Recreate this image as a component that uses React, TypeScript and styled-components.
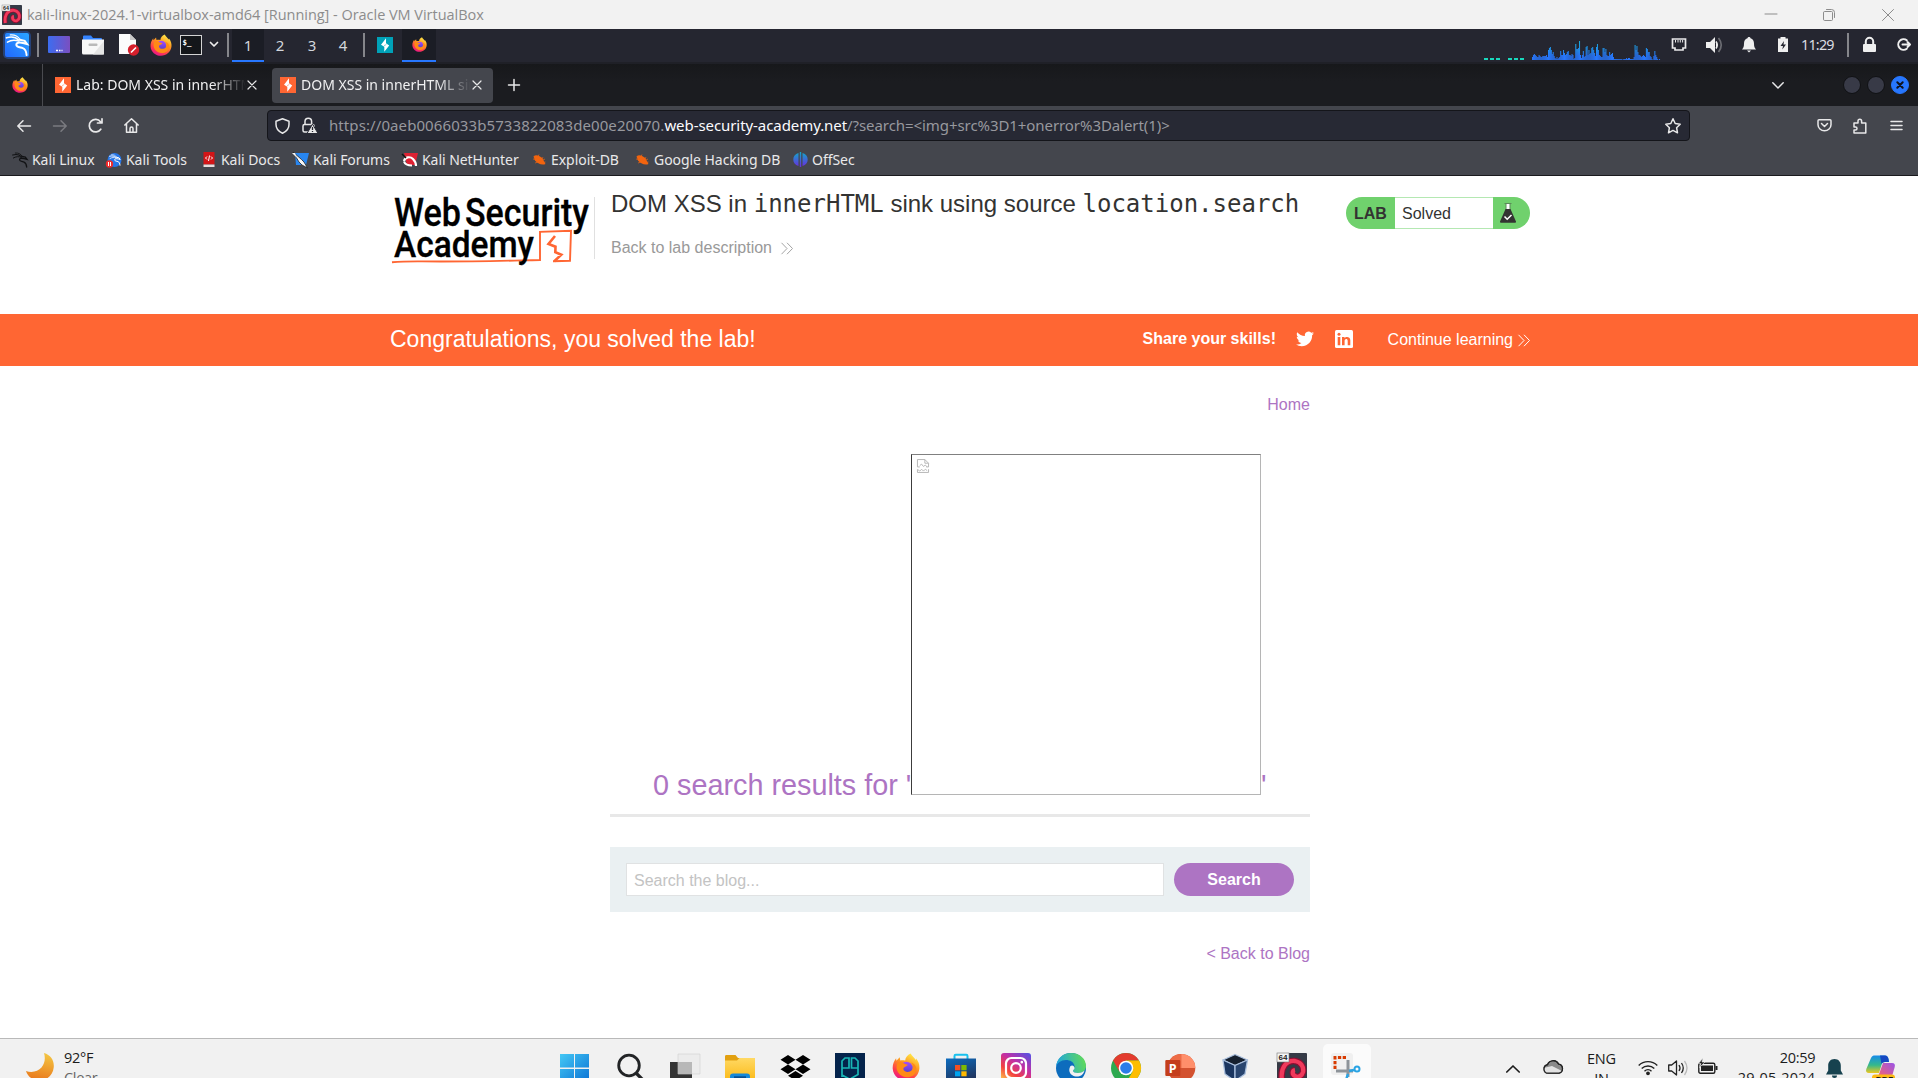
import React from "react";
import styled, { createGlobalStyle } from "styled-components";

const GlobalStyle = createGlobalStyle`
  * { box-sizing: border-box; }
  html, body { margin: 0; padding: 0; }
  body { width: 1918px; height: 1078px; overflow: hidden; background: #fff; }
  svg { display: block; flex: none; overflow: visible; }
`;

const system = `"Open Sans", "Noto Sans", sans-serif`;
const noto = `"Noto Sans", "Open Sans", sans-serif`;
const arial = `"Liberation Sans", Arial, sans-serif`;

const Screen = styled.div`
  display: flex;
  flex-direction: column;
  width: 1918px;
  height: 1078px;
  overflow: hidden;
`;

const Row = styled.div`
  display: flex;
  align-items: center;
`;

/* Fixed-width cell that centres one icon */
const Cell = styled.div<{ $w: number; $ml?: number; $end?: boolean }>`
  display: flex;
  flex: none;
  align-items: center;
  align-self: ${(p) => (p.$end ? "flex-end" : "auto")};
  justify-content: center;
  width: ${(p) => p.$w}px;
  margin-left: ${(p) => p.$ml ?? 0}px;
`;

const Spacer = styled.div`
  flex: 1;
`;

/* ---------- Host window title ---------- */
const TitleBar = styled(Row)`
  flex: none;
  height: 29px;
  padding-left: 2px;
  background: #f2f2f2;
`;

const WindowTitle = styled.div`
  margin: 1px 0 0 5px;
  font: 14.5px/20px ${system};
  letter-spacing: -0.03px;
  color: #8c8c8c;
  white-space: pre;
`;

/* ---------- Guest panel ---------- */
const Panel = styled(Row)`
  flex: none;
  height: 35px;
  padding-bottom: 2px;
  background: #252630;
  border-bottom: 2px solid #1f2027;
`;

const Divider = styled.div<{ $ml: number }>`
  flex: none;
  width: 2px;
  height: 24px;
  margin-left: ${(p) => p.$ml}px;
  background: #85868b;
`;

const Workspace = styled.div<{ $active?: boolean; $w?: number }>`
  display: flex;
  flex: none;
  align-items: center;
  justify-content: center;
  width: ${(p) => p.$w ?? 32}px;
  height: 33px;
  margin-bottom: -2px;
  background: ${(p) => (p.$active ? "#1b1d25" : "transparent")};
  border-bottom: 2px solid ${(p) => (p.$active ? "#2777ff" : "transparent")};
  font: 15px/20px ${noto};
  color: #d3d6dc;
`;

const Clock = styled.div`
  width: 34px;
  margin-left: 12px;
  font: 14.3px/20px ${noto};
  letter-spacing: -0.75px;
  color: #dcdee2;
`;

/* ---------- Browser chrome ---------- */
const TabStrip = styled(Row)`
  flex: none;
  height: 42px;
  background: linear-gradient(#17181b, #1b1c20 40%);
`;

const PinnedTab = styled.div`
  display: flex;
  align-items: center;
  justify-content: center;
  width: 43px;
  height: 42px;
  padding-right: 3px;
  border-right: 1px solid #4a4b50;
`;

const Tab = styled.div<{ $active?: boolean; $w: number }>`
  display: flex;
  flex: none;
  align-items: center;
  width: ${(p) => p.$w}px;
  height: 35px;
  padding-left: ${(p) => (p.$active ? 8 : 12)}px;
  border-radius: 4px;
  background: ${(p) => (p.$active ? "#44464d" : "transparent")};
`;

const TabTitle = styled.div`
  width: 170px;
  margin: -1px 0 0 5px;
  overflow: hidden;
  font: 14px/22px ${noto};
  color: #f0f0f1;
  white-space: nowrap;
  mask-image: linear-gradient(90deg, #000 136px, transparent 170px);
`;

const WindowDot = styled.div<{ $close?: boolean }>`
  display: flex;
  align-items: center;
  justify-content: center;
  width: 18px;
  height: 18px;
  margin-right: 6px;
  border-radius: 50%;
  border: 1px solid ${(p) => (p.$close ? "#2777ff" : "#101114")};
  background: ${(p) => (p.$close ? "#2777ff" : "#383a47")};
`;

const NavBar = styled(Row)`
  flex: none;
  height: 39px;
  padding-left: 6px;
  background: #44464d;
`;

const UrlBar = styled(Row)`
  flex: none;
  width: 1423px;
  height: 31px;
  margin-left: 117px;
  border: 1px solid #14151a;
  border-radius: 4px;
  background: #272934;
`;

const Url = styled.div`
  margin: -2px 0 0 6px;
  font: 15px/22px ${noto};
  letter-spacing: 0.09px;
  color: #97989e;
  white-space: pre;
`;

const UrlDomain = styled.span`
  letter-spacing: -0.07px;
  color: #fbfbfe;
`;

const UrlPath = styled.span`
  letter-spacing: -0.07px;
`;

const Bookmarks = styled(Row)`
  flex: none;
  height: 31px;
  padding-bottom: 1px;
  background: #44464d;
  border-bottom: 1px solid #1a1a1e;
`;

const Bookmark = styled(Row)<{ $w: number }>`
  flex: none;
  width: ${(p) => p.$w}px;
  font: 14px/22px ${noto};
  letter-spacing: -0.05px;
  color: #e9e9ea;
  white-space: nowrap;
`;

const BookmarkLabel = styled.span`
  margin: 1px 0 0 4px;
`;

/* ---------- Lab page ---------- */
const Page = styled.main`
  flex: none;
  height: 862px;
  font-family: ${arial};
`;

const LabHeader = styled.header`
  display: flex;
  width: 1140px;
  height: 138px;
  margin-left: 390px;
  padding-top: 21px;
`;

const HeaderRule = styled.div`
  width: 1px;
  height: 62px;
  margin-left: 4px;
  background: #e0e0e0;
`;

const LabHeading = styled.div`
  margin: -7px 0 0 16px;
  width: 735px;
`;

const LabTitle = styled.h2`
  margin: 0;
  font: 400 24px/28px ${arial};
  color: #333332;
  white-space: nowrap;
  code {
    font: 400 24px/28px "DejaVu Sans Mono", monospace;
  }
`;

const BackLink = styled.div`
  display: flex;
  align-items: center;
  gap: 9px;
  margin-top: 20px;
  font-size: 16px;
  line-height: 20px;
  color: #999;
`;

const Badge = styled.div`
  display: flex;
  width: 184px;
  height: 32px;
  overflow: hidden;
  border-radius: 16px;
  background: #70d16d;
  color: #333332;
  font-size: 16px;
  line-height: 32px;
`;

const BadgeTag = styled.b`
  width: 49px;
  padding: 1px 0 0 8px;
`;

const BadgeStatus = styled.span`
  width: 98px;
  padding-left: 7px;
  border: 1px solid #b4e8b2;
  border-width: 1px 0;
  background: #fff;
  line-height: 31px;
`;

const BadgeIcon = styled.span`
  padding: 6px 0 0 7px;
`;

const Banner = styled.section`
  height: 52px;
  background: #ff6633;
  color: #fff;
`;

const BannerInner = styled(Row)`
  width: 1140px;
  height: 50px;
  margin-left: 390px;
  font-size: 16px;
`;

const BannerTitle = styled.div`
  width: 753px;
  font-size: 23px;
`;

const Share = styled.b`
  width: 153px;
  flex: none;
`;

const Continue = styled(Row)`
  gap: 5px;
  margin: 2px 0 0 35px;
  white-space: nowrap;
`;

const Blog = styled.section`
  width: 700px;
  margin: 0 0 0 610px;
`;

const PurpleLink = styled.div<{ $mt: number }>`
  margin-top: ${(p) => p.$mt}px;
  font-size: 16px;
  line-height: 20px;
  color: #ad74c3;
  text-align: right;
`;

const Results = styled.h1`
  display: flex;
  align-items: flex-end;
  height: 341px;
  margin: 39px 0 0;
  padding-left: 43px;
  font: 400 28.8px/20px ${arial};
  color: #ad74c3;
  white-space: pre;
`;

const Phrase = styled.span`
  width: 258px;
`;

const BrokenImage = styled.span`
  width: 350px;
  height: 341px;
  padding: 4px 5px;
  border: 1px solid #b5b5b5;
  border-top: 1px solid #808080;
  border-left: 1px solid #3c3c3c;
`;

const Rule = styled.hr`
  height: 3px;
  margin: 19px 0 30px;
  border: 0;
  background: #e8e8e8;
`;

const SearchBox = styled(Row)`
  height: 65px;
  padding: 0 16px;
  gap: 10px;
  background: #eaf0f2;
`;

const Field = styled.div`
  width: 538px;
  height: 33px;
  padding-left: 7px;
  border: 1px solid #e0e2e3;
  background: #fff;
  color: #c3c3c3;
  font-size: 16px;
  line-height: 33px;
`;

const SearchButton = styled.button`
  width: 120px;
  height: 33px;
  padding: 0;
  border: 0;
  border-radius: 17px;
  background: #ad74c3;
  color: #fff;
  font: 700 16px/34px ${arial};
`;

/* ---------- Host taskbar ---------- */
const Taskbar = styled.footer`
  display: flex;
  flex: none;
  height: 40px;
  overflow: hidden;
  border-top: 1px solid #b9b9b9;
  background: #f1f1f1;
  font: 14.5px/20px ${system};
  color: #1c1c1c;
`;

const Weather = styled.div`
  display: flex;
  width: 547px;
  padding: 9px 0 0 26px;
`;

const MoonIcon = styled.svg`
  margin-top: 5px;
`;

const TwoLines = styled.div<{ $w?: number; $align?: string; $ml?: number; $mt?: number }>`
  flex: none;
  width: ${(p) => (p.$w ? p.$w + "px" : "auto")};
  margin-left: ${(p) => p.$ml ?? 0}px;
  padding-top: ${(p) => p.$mt ?? 0}px;
  text-align: ${(p) => p.$align ?? "left"};
  white-space: nowrap;
  letter-spacing: -0.3px;
`;

const DateLine = styled.div`
  letter-spacing: 0.2px;
`;

const Muted = styled.div`
  color: #666;
`;

const Apps = styled.div`
  display: grid;
  grid-template-columns: repeat(15, 55.17px);
`;

const AppButton = styled.div<{ $active?: boolean }>`
  display: flex;
  justify-content: center;
  width: 48px;
  height: 48px;
  margin: 5px auto 0;
  padding-top: 9px;
  border-radius: 5px;
  background: ${(p) => (p.$active ? "#fbfbfb" : "transparent")};
`;

const Tray = styled.div`
  display: flex;
  margin-left: 119px;
`;

const TrayIcon = styled.div<{ $w: number; $mt: number }>`
  display: flex;
  justify-content: center;
  flex: none;
  width: ${(p) => p.$w}px;
  padding-top: ${(p) => p.$mt}px;
`;

/* ---------- Icons ---------- */
const GradientSheet = styled.svg`
  position: absolute;
`;

const Defs = () => (
  <GradientSheet width="0" height="0">
    <defs>
      <linearGradient id="ff" x1="0.8" y1="0" x2="0.3" y2="1">
        <stop offset="0" stopColor="#fff34f" />
        <stop offset="0.4" stopColor="#ff9a1f" />
        <stop offset="0.75" stopColor="#ff3c4e" />
        <stop offset="1" stopColor="#e8158a" />
      </linearGradient>
      <linearGradient id="ffp" x1="0" y1="0" x2="0" y2="1">
        <stop offset="0" stopColor="#a84bff" />
        <stop offset="1" stopColor="#4a3fc4" />
      </linearGradient>
      <linearGradient id="kali" x1="0" y1="1" x2="1" y2="0">
        <stop offset="0" stopColor="#2168ff" />
        <stop offset="1" stopColor="#2aa5ff" />
      </linearGradient>
      <linearGradient id="desk" x1="0" y1="0" x2="1" y2="0">
        <stop offset="0" stopColor="#3c6df0" />
        <stop offset="1" stopColor="#7b4fc0" />
      </linearGradient>
      <linearGradient id="off" x1="0" y1="0" x2="0" y2="1">
        <stop offset="0" stopColor="#10a9c9" />
        <stop offset="1" stopColor="#6a2be0" />
      </linearGradient>
      <linearGradient id="cpu" gradientUnits="userSpaceOnUse" x1="0" y1="0" x2="0" y2="20">
        <stop offset="0" stopColor="#16bbe4" />
        <stop offset="0.8" stopColor="#2777ff" />
      </linearGradient>
      <linearGradient id="moon" x1="0.6" y1="0" x2="0.4" y2="1">
        <stop offset="0" stopColor="#f4c542" />
        <stop offset="1" stopColor="#e9781c" />
      </linearGradient>
      <linearGradient id="win" x1="0" y1="0" x2="1" y2="1">
        <stop offset="0" stopColor="#44c8f5" />
        <stop offset="1" stopColor="#0b72d4" />
      </linearGradient>
      <linearGradient id="insta" x1="0.9" y1="0" x2="0.2" y2="1">
        <stop offset="0" stopColor="#5b4fe0" />
        <stop offset="0.4" stopColor="#c32fa4" />
        <stop offset="0.7" stopColor="#f3403f" />
        <stop offset="1" stopColor="#fdc04a" />
      </linearGradient>
      <linearGradient id="edge" x1="0" y1="0.4" x2="1" y2="0.2">
        <stop offset="0" stopColor="#1fa5e0" />
        <stop offset="1" stopColor="#63dd52" />
      </linearGradient>
      <linearGradient id="folder" x1="0" y1="0" x2="0" y2="1">
        <stop offset="0" stopColor="#ffd964" />
        <stop offset="1" stopColor="#fbb916" />
      </linearGradient>
      <linearGradient id="store" x1="0" y1="0" x2="0.4" y2="1">
        <stop offset="0" stopColor="#0c6cbf" />
        <stop offset="1" stopColor="#1f3762" />
      </linearGradient>
      <linearGradient id="cop1" x1="0" y1="0" x2="0" y2="1">
        <stop offset="0" stopColor="#168bea" />
        <stop offset="0.55" stopColor="#35b98b" />
        <stop offset="1" stopColor="#ecc71f" />
      </linearGradient>
      <linearGradient id="cop2" x1="1" y1="0" x2="0" y2="1">
        <stop offset="0" stopColor="#9a53e8" />
        <stop offset="1" stopColor="#f5636f" />
      </linearGradient>
    </defs>
  </GradientSheet>
);

const Firefox = ({ s }: { s: number }) => (
  <svg width={s} height={s} viewBox="0 0 24 24">
    <path
      d="M16 .5c1 2 3.2 3.500 4.300 5.500l.4-1.200c2.400 3 3.100 6 2.700 9.200C22.700 19.600 18 23.700 12 23.700S1 19.300.600 13.500c-.2-3.500.9-6.300 2.900-9l.3 2.200 2.800-3 .5 2.800c1.400-.4 2.900-.3 4.200 0C11.500 4 13.200 1.600 16 .5z"
      fill="url(#ff)"
    />
    <circle cx="12.300" cy="12.800" r="5.400" fill="url(#ffp)" />
    <path
      d="M4.500 8.500c2-.9 4-.9 5.500.2 1.200.8 2.700.8 3.500 1.300-.5 1.400-2.300 1.500-3.300 2.400-.9.900-.4 2.300.7 3.100 1.800 1.200 4.600.9 6.300-.9 1.600-1.800 1-4.800-1-6.400 3.300.9 5 3.500 4.600 6.700-.5 3.500-4.100 6-8.200 5.900-5-.2-8.700-4.200-8.700-8.500z"
      fill="#ff8a16"
    />
  </svg>
);

const Dragon = ({ color = "#fff", s = 22 }: { color?: string; s?: number }) => (
  <svg width={s} height={s} viewBox="0 0 24 24" fill="none" stroke={color} strokeLinecap="round">
    <path d="M1 4.500C6 3 11 4 14 7" strokeWidth="1.700" />
    <path d="M2 9c4-2.500 8-2.500 12-1" strokeWidth="1.500" />
    <path d="M5 1.500c5-.5 8 1.500 10 4.500" strokeWidth="1.300" />
    <path d="M15 6.500l5 1.200 2.500 3.300-4.200-1.100c-4-1-7.300-.4-7 2.100.3 2.300 4.200 2.300 6.700 3.200 2.600 1 3.700 3.400 4 7.300" strokeWidth="2" />
  </svg>
);

const KaliMenu = () => (
  <svg width="30" height="30" viewBox="0 0 30 30">
    <rect x="1" y="1" width="28" height="28" rx="5" fill="#2777ff" opacity=".35" />
    <rect x="3" y="3" width="24" height="24" rx="2" fill="url(#kali)" />
    <g transform="translate(3.500 3.500) scale(.96)">
      <Dragon s={24} />
    </g>
  </svg>
);

const Burp = ({ bg }: { bg: string }) => (
  <svg width="16" height="16" viewBox="0 0 16 16">
    <rect width="16" height="16" fill={bg} />
    <path d="M9 1.300V6.200L12.200 8.500 7.300 14.700V9.800L4 7.700z" fill="#fff" />
    <path d="M7 8.600l2.300-1" stroke={bg} strokeWidth=".5" />
  </svg>
);

const DebianSwirl = ({ s }: { s: number }) => (
  <svg width={s} height={s} viewBox="0 0 30 30">
    <rect width="30" height="30" rx="1" fill="#353a46" />
    <path d="M5 27C3 14 10 7 18 8c6 1 9 6 8 11-1 4-5 6-8 4-3-1.500-3-5.500 0-6" fill="none" stroke="#8e0c31" strokeWidth="6.500" />
    <path d="M5 27C3 14 10 7 18 8c6 1 9 6 8 11-1 4-5 6-8 4-3-1.500-3-5.500 0-6" fill="none" stroke="#f0395b" strokeWidth="4.300" />
    <rect width="12" height="9" fill="#f4f4f4" stroke="#777" strokeWidth=".6" />
    <text x="1.500" y="7.300" fontFamily="Liberation Sans" fontWeight="700" fontSize="8" fill="#222">64</text>
  </svg>
);

const Chevrons = ({ color }: { color: string }) => (
  <svg width="12" height="13" viewBox="0 0 12 13" fill="none" stroke={color} strokeWidth="1">
    <path d="M.5.800 6 6.500.5 12.200M6 .8l5.500 5.700L6 12.200" />
  </svg>
);

const Stroke = ({ d, w = 18, h = 18, sw = 1.5, c = "#e8e8e9" }: { d: string; w?: number; h?: number; sw?: number; c?: string }) => (
  <svg width={w} height={h} viewBox={`0 0 ${w} ${h}`} fill="none" stroke={c} strokeWidth={sw} strokeLinecap="round" strokeLinejoin="round">
    <path d={d} />
  </svg>
);

const cpuLoad = [
  3, 5, 6, 5, 4, 3, 3, 5, 4, 3, 3, 4, 4, 4, 4, 5, 3, 10, 12, 13, 10, 6, 8, 4, 2, 1, 3, 1, 2, 3, 9, 5, 5, 10, 7, 5, 6, 8, 9, 5, 5, 4, 6, 5,
  1, 2, 16, 11, 11, 12, 19, 5, 2, 5, 9, 3, 4, 13, 14, 5, 10, 6, 7, 12, 13, 10, 7, 4, 13, 16, 10, 5, 4, 3, 3, 12, 12, 8, 11, 5, 4, 4, 8,
  5, 6, 7, 3, 1, 1, 1, 1, 1, 1, 1, 1, 1, 0, 1, 1, 1, 2, 1, 2, 2, 1, 1, 1, 1, 3, 15, 10, 14, 8, 5, 5, 4, 3, 4, 5, 4, 3, 12, 11, 8, 8, 4,
  3, 1, 0, 4, 9, 5, 3, 1, 0, 1,
];

const CpuGraph = () => (
  <svg width="128" height="20" viewBox={`0 0 ${cpuLoad.length} 20`} preserveAspectRatio="none">
    {cpuLoad.map((v, i) => (
      <rect key={i} x={i} y={20 - v} width="1.050" height={v} fill="url(#cpu)" />
    ))}
  </svg>
);

const Logo = () => (
  <svg width="200" height="66" viewBox="0 0 200 66">
    <g fontFamily="Roboto, 'Open Sans', sans-serif" fontWeight="500" fontSize="38" fill="#000" stroke="#000" strokeWidth=".3">
      <text x="4" y="28.500" textLength="67" lengthAdjust="spacingAndGlyphs">Web</text>
      <text x="75" y="28.500" textLength="124" lengthAdjust="spacingAndGlyphs">Security</text>
    </g>
    <path d="M2 65.300c10-.9 18-1 30-.9 40 .6 80-.6 118-1.400V34.800l31-1-1 30-17 .5" fill="none" stroke="#ff6633" strokeWidth="1.900" />
    <path d="M165 39l-6.500 8 7 2.700-.2 5.500 6 2.500-7 6.500" fill="none" stroke="#ff6633" strokeWidth="2.600" />
    <text x="4" y="59.500" textLength="140" lengthAdjust="spacingAndGlyphs" fontFamily="Roboto, 'Open Sans', sans-serif" fontWeight="500" fontSize="36" stroke="#000" strokeWidth=".3">Academy</text>
  </svg>
);

const Flask = () => (
  <svg width="16" height="20" viewBox="0 0 16 20">
    <path d="M6 1h4v8H6z" fill="#fff" />
    <path d="M4.500.500h7M6 1v6.500M10 1v6.500" stroke="#5a8a58" strokeWidth="1" fill="none" />
    <path d="M5.500 6h5L16 18.500c.2.800-.2 1.200-1 1.200H1c-.8 0-1.200-.4-1-1.200z" fill="#333332" />
    <path d="M4.500 13.500l2.700 2.800 4.300-4.300" stroke="#fff" strokeWidth="1.500" fill="none" />
  </svg>
);

const Bug = () => (
  <svg width="15" height="15" viewBox="0 0 15 15">
    <path d="M1.500 4.500C4 2 8 4 10.500 6.500l3 5.500C10 13.500 5 11.500 3 8.500z" fill="#f2640f" />
    <path d="M1 7l3 .5M3 11l3-1M7 2.500L6 4.500M11 5l-1 2M13 7l-2 1M13.500 10l-2 .5" stroke="#f2640f" strokeWidth=".7" />
  </svg>
);

const bookmarks: { label: string; w: number; icon: React.ReactNode }[] = [
  { label: "Kali Linux", w: 94, icon: <Dragon color="#111214" s={16} /> },
  {
    label: "Kali Tools",
    w: 95,
    icon: (
      <svg width="16" height="16" viewBox="0 0 16 16">
        <circle cx="8.500" cy="8" r="7" fill="#2777e8" />
        <g transform="translate(3 2)"><Dragon s={12} /></g>
        <circle cx="3.500" cy="12" r="3.700" fill="#f02b2b" />
        <path d="M2.500 10v4M4.500 10v4" stroke="#fff" />
      </svg>
    ),
  },
  {
    label: "Kali Docs",
    w: 91,
    icon: (
      <svg width="16" height="16" viewBox="0 0 16 16">
        <path d="M2.500 0h11v12.500h-11z" fill="#d31517" />
        <path d="M2.500 12.500h11V15h-11z" fill="#e6dddd" />
        <path d="M6 4.500 4.500 6 6 7.500M10 4.500 11.500 6 10 7.500M8.500 3.500l-1 5.500" stroke="#fff" fill="none" />
      </svg>
    ),
  },
  {
    label: "Kali Forums",
    w: 110,
    icon: (
      <svg width="17" height="16" viewBox="0 0 17 16">
        <path d="M3 1h14l-3 12H4z" fill="#2886f0" />
        <path d="M1 0l8.500 7.500L12 10l3.500 6L10 13 7 10z" fill="#f6f6f6" stroke="#222" strokeWidth=".8" />
        <path d="M0 1h3l2 5z" fill="#f6f6f6" />
      </svg>
    ),
  },
  {
    label: "Kali NetHunter",
    w: 130,
    icon: (
      <svg width="16" height="16" viewBox="0 0 16 16">
        <path d="M2 1h14l-3 12H5z" fill="#dd2233" />
        <path d="M2 9c1-4 6-5 9-2 2 2 3 4 3 7M2 9.500c1 3 4 4 8 4" stroke="#fff" strokeWidth="2.200" fill="none" />
        <path d="M0 2l4 4" stroke="#111" strokeWidth="1.500" />
      </svg>
    ),
  },
  { label: "Exploit-DB", w: 103, icon: <Bug /> },
  { label: "Google Hacking DB", w: 158, icon: <Bug /> },
  {
    label: "OffSec",
    w: 80,
    icon: (
      <svg width="15" height="15" viewBox="0 0 15 15" fill="url(#off)">
        <path d="M5.500 1v13C2 13 .3 10.500.300 7.500S2 2 5.500 1zM9.500 1v13c3.500-1 5.200-3.500 5.200-6.500S13 2 9.500 1zM6.800 0h1.400v15H6.800z" />
      </svg>
    ),
  },
];

const appIcons = {
  start: (
    <svg width="29" height="29" viewBox="0 0 29 29" fill="url(#win)">
      <path d="M0 1h14v13.500H0zM15 1h14v13.500H15zM0 16h14v13H0zM15 16h14v13H15z" />
    </svg>
  ),
  search: (
    <svg width="28" height="30" viewBox="0 0 28 30" fill="none" stroke="#222426" strokeWidth="2.800">
      <circle cx="13" cy="12.500" r="10.300" />
      <path d="M20 20l8 8" strokeWidth="3.300" />
    </svg>
  ),
  tasks: (
    <svg width="30" height="30" viewBox="0 0 30 30">
      <path d="M0 9h22v19H0z" fill="#343434" />
      <path d="M8 1h22v20H8z" fill="#ececec" stroke="#d2d2d2" strokeWidth=".6" />
      <path d="M8 9h14v12H8z" fill="#b8b8b8" />
    </svg>
  ),
  folder: (
    <svg width="30" height="30" viewBox="0 0 30 30">
      <path d="M0 3.500C0 2.500.500 2 1.500 2h9l2.500 3H30v4H0z" fill="#e2a010" />
      <path d="M0 7.500h12L14.500 5H30v23H0z" fill="url(#folder)" />
      <path d="M5 30v-6.500q0-3 3-3h14q3 0 3 3V30z" fill="#1688d8" />
      <path d="M9 24.300h12" stroke="#0a4e8e" strokeWidth="2" />
    </svg>
  ),
  dropbox: (
    <svg width="30" height="30" viewBox="-.5 0 30 30" fill="#000">
      <path d="M7.500 2L15 6.800 7.500 11.500 0 6.800zM22.500 2L30 6.800l-7.500 4.700L15 6.800zM7.500 11.500L15 16.300 7.500 21 0 16.300zM22.500 11.500l7.500 4.800-7.500 4.700-7.500-4.700zM15 18l7.500 4.800L15 27.500l-7.500-4.700z" />
    </svg>
  ),
  pg: (
    <svg width="30" height="30" viewBox="0 0 30 30" fill="none">
      <path d="M0 0h30v30H0z" fill="#04234b" />
      <path d="M7 24V8L10 5h4v10H7M23 15h-6.500V5h3.500l3 3v13.500l-7 4M7 22l6.500 3.500" stroke="#19b5b5" strokeWidth="1.700" />
    </svg>
  ),
  store: (
    <svg width="30" height="30" viewBox="0 0 30 30">
      <path d="M8.500 6V3q0-1.200 1.200-1.200h10.600q1.200 0 1.200 1.200v3" stroke="#19c1ee" strokeWidth="2" fill="none" />
      <path d="M0 5.500h30V28H0z" fill="url(#store)" />
      <path d="M9 12h5.300v5.300H9z" fill="#f25022" />
      <path d="M15.300 12h5.300v5.300h-5.300z" fill="#7fba00" />
      <path d="M9 18.300h5.300v5H9z" fill="#00a4ef" />
      <path d="M15.300 18.300h5.300v5h-5.300z" fill="#ffb900" />
    </svg>
  ),
  insta: (
    <svg width="30" height="30" viewBox="0 0 30 30" fill="none" stroke="#fff" strokeWidth="2.200">
      <rect width="30" height="30" rx="3" fill="url(#insta)" stroke="none" />
      <rect x="5" y="5" width="20" height="20" rx="5.500" />
      <circle cx="15" cy="15" r="4.800" />
      <circle cx="20.800" cy="9.200" r=".6" strokeWidth="1.500" />
    </svg>
  ),
  edge: (
    <svg width="30" height="30" viewBox="0 0 30 30">
      <circle cx="15" cy="15" r="15" fill="#0d6cbd" />
      <path d="M0 14C1 5 7 0 15 0c9 0 15 6 15 13 0 5-4 7-8 7-3 0-5-1-5-2s2-2 1.500-5C18 9 14 7 10 7c-5 0-9 3-10 7z" fill="url(#edge)" />
      <path d="M17 18c0 1 2 2 5 2 3 0 5-1 6.500-2.500C27 24 20 25 16 22c-3-2-3.500-6-1.500-9 2-1.500 4.500.5 4 2.500-.3 1.200-1.500 1.500-1.500 2.500z" fill="#f1f1f1" />
    </svg>
  ),
  chrome: (
    <svg width="30" height="30" viewBox="0 0 30 30">
      <circle cx="15" cy="15" r="15" fill="#2da94f" />
      <path d="M2 7.500A15 15 0 0128 7.500H15L8.500 18.800z" fill="#e33b2e" />
      <path d="M28 7.500A15 15 0 0115 30l6.500-11.200L15 7.500z" fill="#fdbd00" />
      <circle cx="15" cy="15" r="7.300" fill="#fff" />
      <circle cx="15" cy="15" r="5.800" fill="#2a7de8" />
    </svg>
  ),
  ppt: (
    <svg width="30" height="30" viewBox=".7 0 30 30">
      <circle cx="16" cy="15" r="14" fill="#d35230" />
      <path d="M16 1a14 14 0 00-14 14h14z" fill="#ed6c47" />
      <path d="M16 1a14 14 0 0114 14H16z" fill="#ff8f6b" />
      <rect x="0" y="7" width="15" height="16" rx="1" fill="#c43e1c" />
      <text x="3.500" y="19.500" fontFamily="Open Sans" fontWeight="700" fontSize="12.500" fill="#fff">P</text>
    </svg>
  ),
  vbox: (
    <svg width="28" height="30" viewBox="1 0 28 30" stroke="#a9bfdd" strokeWidth="1.300" strokeLinejoin="round">
      <path d="M14 1.500L26.500 7 14 12.500 2 7z" fill="#16202f" />
      <path d="M2 7l12 5.500V28L4 21z" fill="#1b3660" />
      <path d="M26.500 7L14 12.500V28l10-7z" fill="#29456f" />
    </svg>
  ),
  snip: (
    <svg width="34" height="30" viewBox="3 0 34 30" fill="none">
      <rect x="4" y="0" width="22" height="22" rx="3" fill="#f0f0f0" />
      <path d="M8 16V4.500h12" stroke="#d83b01" strokeWidth="3" strokeDasharray="3.300 1.500" />
      <path d="M21 7v17M9 18h17" stroke="#8d9399" strokeWidth="3" />
      <circle cx="30" cy="16" r="2.500" stroke="#2aa4e4" strokeWidth="2" />
      <path d="M27 17l-5 1M19 27l2-6" stroke="#2aa4e4" strokeWidth="2.500" />
    </svg>
  ),
};

const apps: React.ReactNode[] = [
  appIcons.start, appIcons.search, appIcons.tasks, appIcons.folder, appIcons.dropbox, appIcons.pg, <Firefox s={28} />, appIcons.store,
  appIcons.insta, appIcons.edge, appIcons.chrome, appIcons.ppt, appIcons.vbox, <DebianSwirl s={30} />, appIcons.snip,
];

export default function App() {
  return (
    <Screen>
      <GlobalStyle />
      <Defs />

      <TitleBar>
        <DebianSwirl s={20} />
        <WindowTitle>kali-linux-2024.1-virtualbox-amd64 [Running] - Oracle VM VirtualBox</WindowTitle>
        <Spacer />
        <Cell $w={58}><Stroke w={12} h={12} sw={1} c="#8c8c8c" d="M0 5h12" /></Cell>
        <Cell $w={58}><Stroke w={12} h={12} sw={1} c="#8c8c8c" d="M.5 3.500q0-1 1-1h7q1 0 1 1v7q0 1-1 1h-7q-1 0-1-1zM3.500.500h5q3 0 3 3v5" /></Cell>
        <Cell $w={60}><Stroke w={12} h={12} sw={1} c="#8c8c8c" d="M.5.500l11 11M11.500.500l-11 11" /></Cell>
      </TitleBar>

      <Panel>
        <Cell $w={30} $ml={2}><KaliMenu /></Cell>
        <Divider $ml={5} />
        <Cell $w={22} $ml={9}>
          <svg width="22" height="17" viewBox="0 0 22 17">
            <rect width="22" height="17" rx="1" fill="url(#desk)" />
            <path d="M8 14.500h2M11 14.500h1.500M13.500 14.500h1" stroke="#fff" strokeWidth="1.500" />
          </svg>
        </Cell>
        <Cell $w={22} $ml={12}>
          <svg width="22" height="20" viewBox="0 0 22 20">
            <path d="M1 5V1.500Q1 .5 2 .5h7l2 2.500h8q1 0 1 1V6z" fill="#3584ff" />
            <path d="M0 4.500h22V18q0 1.500-1.500 1.500h-19Q0 19.500 0 18z" fill="#f7f7f7" />
            <path d="M22 6v13.500H11z" fill="#e4e4e4" />
            <rect x="6.500" y="8.500" width="9" height="2.500" rx="1" fill="#b9b9b9" />
          </svg>
        </Cell>
        <Cell $w={20} $ml={15}>
          <svg width="20" height="22" viewBox="0 0 20 22">
            <path d="M0 0h11l6 6v14H0z" fill="#fbfbfb" />
            <path d="M11 0l6 6h-6z" fill="#c8c8c8" />
            <circle cx="14.500" cy="16" r="5.700" fill="#d61f2c" />
            <path d="M12 18.500l5-5" stroke="#fff" strokeWidth="1.600" />
          </svg>
        </Cell>
        <Cell $w={22} $ml={11}><Firefox s={22} /></Cell>
        <Cell $w={22} $ml={8}>
          <svg width="22" height="20" viewBox="0 0 22 20">
            <rect x=".5" y=".5" width="21" height="19" fill="#14161a" stroke="#d4d4d4" />
            <text x="2.500" y="9.500" fontFamily="DejaVu Sans Mono" fontWeight="700" fontSize="7.500" fill="#fff">$_</text>
          </svg>
        </Cell>
        <Cell $w={10} $ml={7}><Stroke w={8} h={5} sw={1.700} c="#eee" d="M.5.500L4 4 7.500.500" /></Cell>
        <Divider $ml={8} />
        <Cell $w={3} />
        <Workspace $active>1</Workspace>
        <Workspace>2</Workspace>
        <Workspace>3</Workspace>
        <Workspace $w={30}>4</Workspace>
        <Divider $ml={5} />
        <Cell $w={16} $ml={12}><Burp bg="#00a2b8" /></Cell>
        <Cell $w={9} />
        <Workspace $active $w={34}><Firefox s={15} /></Workspace>
        <Spacer />
        <Cell $w={40} $end>
          <svg width="40" height="2" viewBox="0 0 40 2">
            <path d="M0 1h4M6 1h4M12 1h4M24 1h4M30 1h4M36 1h4" stroke="#19d8bd" strokeWidth="2" />
          </svg>
        </Cell>
        <Cell $w={128} $ml={8} $end><CpuGraph /></Cell>
        <Cell $w={16} $ml={11}>
          <svg width="16" height="13" viewBox="0 0 16 13" fill="none" stroke="#e9e9ea">
            <path d="M1.500 1h13v9h-2.500v2H4v-2H1.500z" strokeWidth="1.700" />
            <path d="M4.500 2v2.500M7 2v2.500M9.300 2v2.500M11.600 2v2.500" strokeWidth="1" />
          </svg>
        </Cell>
        <Cell $w={18} $ml={18}>
          <svg width="17" height="16" viewBox="0 0 17 16">
            <path d="M0 5h4l5-5v16l-5-5H0z" fill="#efefef" />
            <path d="M10 4.500q2.500 3.500 0 7" fill="#efefef" stroke="#efefef" strokeWidth="1.500" />
            <path d="M12.500 1q5.500 7 0 14" fill="none" stroke="#6b6c72" strokeWidth="1.700" />
          </svg>
        </Cell>
        <Cell $w={18} $ml={17}>
          <svg width="14" height="16" viewBox="0 0 14 16" fill="#efefef">
            <path d="M7 0c1 0 1.500.600 1.500 1.300C11 2 12 4 12 6.500c0 3 .5 4.500 2 6H0c1.500-1.500 2-3 2-6C2 4 3 2 5.500 1.300 5.500.600 6 0 7 0zM5 13.500h4L7 15.500z" />
          </svg>
        </Cell>
        <Cell $w={12} $ml={19}>
          <svg width="10" height="15" viewBox="0 0 10 15">
            <path d="M2.500 0h5v1.500H10V15H0V1.500h2.500z" fill="#efefef" />
            <path d="M6 4L2.500 9H5l-.7 3.500L8 7.500H5.500z" fill="#252630" />
          </svg>
        </Cell>
        <Clock>11:29</Clock>
        <Divider $ml={12} />
        <Cell $w={14} $ml={13}>
          <svg width="13" height="15" viewBox="0 0 13 15">
            <rect y="7" width="13" height="8" rx="1" fill="#efefef" />
            <path d="M2.800 7V4.500a3.700 3.700 0 017.400 0V7" fill="none" stroke="#efefef" strokeWidth="2" />
          </svg>
        </Cell>
        <Cell $w={16} $ml={20}><Stroke w={14} h={13} sw={2} c="#efefef" d="M9.800 2.300A5.300 5.300 0 109.800 10.700M5.500 6.500h7M10.500 4l2.500 2.500-2.500 2.500" /></Cell>
        <Cell $w={6} />
      </Panel>

      <TabStrip>
        <PinnedTab><Firefox s={16} /></PinnedTab>
        <Tab $w={229}>
          <Burp bg="#ff6633" />
          <TabTitle>Lab: DOM XSS in innerHTML sink</TabTitle>
          <Cell $w={10} $ml={1}><Stroke w={8} h={8} sw={1.200} d="M0 0l8 8M8 0L0 8" /></Cell>
        </Tab>
        <Tab $w={221} $active>
          <Burp bg="#ff6633" />
          <TabTitle>DOM XSS in innerHTML sink using</TabTitle>
          <Cell $w={10} $ml={1}><Stroke w={8} h={8} sw={1.200} d="M0 0l8 8M8 0L0 8" /></Cell>
        </Tab>
        <Cell $w={12} $ml={15}><Stroke w={12} h={12} d="M6 .500v11M.5 6h11" /></Cell>
        <Spacer />
        <Cell $w={14}><Stroke w={12} h={7} d="M.8.800L6 6 11.200.800" /></Cell>
        <Cell $w={58} />
        <WindowDot />
        <WindowDot />
        <WindowDot $close><Stroke w={6} h={6} sw={2} c="#10131d" d="M.3.300l5.400 5.400M5.700.300L.3 5.700" /></WindowDot>
        <Cell $w={3} />
      </TabStrip>

      <NavBar>
        <Cell $w={36}><Stroke w={14} h={12} d="M6 .800L.8 6 6 11.200M1 6h12.500" /></Cell>
        <Cell $w={36}><Stroke w={14} h={12} c="#7a7b80" d="M8 .800L13.200 6 8 11.200M13 6H.500" /></Cell>
        <Cell $w={35}><Stroke w={15} h={15} sw={1.700} d="M12.800 11.200A6.300 6.300 0 1112.500 3.700M14 .800V5H9.500" /></Cell>
        <Cell $w={36}><Stroke w={15} h={15} d="M.8 7L7.500.800 14.200 7M2.500 5.800V14.200h10V5.800M6 14v-3.500q0-1.500 1.500-1.500T9 10.500V14" /></Cell>
        <Cell $w={1} />
        <UrlBar>
          <Cell $w={15} $ml={7}><Stroke w={15} h={16} d="M7.500.800l6.500 2.400v3.300c0 4-2.500 7-6.500 8.700C3.500 13.500 1 10.500 1 6.500V3.200z" /></Cell>
          <Cell $w={16} $ml={12}>
            <svg width="16" height="17" viewBox="0 0 16 17">
              <rect x="1" y="7.500" width="11" height="7.500" rx="1.500" fill="none" stroke="#e8e8e9" strokeWidth="1.500" />
              <path d="M3 7V4.500a3.300 3.300 0 016.600 0V7" fill="none" stroke="#e8e8e9" strokeWidth="1.500" />
              <path d="M10.500 7l5.500 9.500H5z" fill="#e8e8e9" stroke="#272934" />
              <path d="M10.500 10v3M10.500 14v1" stroke="#272934" strokeWidth="1.300" />
            </svg>
          </Cell>
          <Cell $w={5} />
          <Url>
            https://0aeb0066033b5733822083de00e20070.<UrlDomain>web-security-academy.net</UrlDomain>
            <UrlPath>/?search=&lt;img+src%3D1+onerror%3Dalert(1)&gt;</UrlPath>
          </Url>
          <Spacer />
          <Stroke w={16} h={16} d="M8 .800l2.200 4.700 5 .7-3.600 3.500.9 5.100L8 12.400l-4.500 2.400.9-5.100L.8 6.200l5-.7z" />
          <Cell $w={8} />
        </UrlBar>
        <Spacer />
        <Cell $w={36}><Stroke w={15} h={13} sw={1.500} d="M2 .800h11q1 0 1 1v4a6.500 6 0 01-13 0v-4q0-1 1-1zM4.500 4.500l3 3 3-3" /></Cell>
        <Cell $w={36}><Stroke w={14} h={16} d="M1 9V5h4V3a1.800 1.800 0 013.600 0v2H12.800V15H1v-3h1.500a1.500 1.500 0 000-3z" /></Cell>
        <Cell $w={36}><Stroke w={13} h={11} d="M1 1.500h11M1 5.500h11M1 9.500h11" /></Cell>
        <Cell $w={4} />
      </NavBar>

      <Bookmarks>
        <Cell $w={12} />
        {bookmarks.map((b) => (
          <Bookmark key={b.label} $w={b.w}>
            {b.icon}
            <BookmarkLabel>{b.label}</BookmarkLabel>
          </Bookmark>
        ))}
      </Bookmarks>

      <Page>
        <LabHeader>
          <Logo />
          <HeaderRule />
          <LabHeading>
            <LabTitle>
              DOM XSS in <code>innerHTML</code> sink using source <code>location.search</code>
            </LabTitle>
            <BackLink>
              Back to lab description <Chevrons color="#a5a5a5" />
            </BackLink>
          </LabHeading>
          <Badge>
            <BadgeTag>LAB</BadgeTag>
            <BadgeStatus>Solved</BadgeStatus>
            <BadgeIcon><Flask /></BadgeIcon>
          </Badge>
        </LabHeader>

        <Banner>
          <BannerInner>
            <BannerTitle>Congratulations, you solved the lab!</BannerTitle>
            <Share>Share your skills!</Share>
            <svg width="18" height="16" viewBox="0 0 24 20" fill="#fff">
              <path d="M24 2.400c-.9.400-1.800.7-2.800.8 1-.6 1.800-1.600 2.200-2.700-1 .6-2 1-3.100 1.200A4.900 4.900 0 0011.900 6.100C7.800 5.900 4.200 3.900 1.700.900.400 3.100 1 6 3.200 7.500c-.8 0-1.600-.2-2.200-.6 0 2.300 1.600 4.400 3.900 4.900-.7.200-1.500.2-2.200.1.600 2 2.400 3.400 4.600 3.400A9.900 9.900 0 010 17.300 13.900 13.900 0 007.500 19.500c9.100 0 14.300-7.700 14-14.600 1-.7 1.800-1.600 2.500-2.500z" />
            </svg>
            <Cell $w={18} $ml={21}>
              <svg width="18" height="18" viewBox="0 0 18 18">
                <rect width="18" height="18" rx="1.500" fill="#fff" />
                <path d="M2.700 7h2.600v8.300H2.700zM7 7h2.500v1.100c1-1.800 5.800-2 5.800 2.200v5h-2.600V11c0-2.700-3.100-2.400-3.100 0v4.300H7z" fill="#ff6633" />
                <circle cx="4" cy="4.300" r="1.500" fill="#ff6633" />
              </svg>
            </Cell>
            <Continue>Continue learning <Chevrons color="#fff" /></Continue>
          </BannerInner>
        </Banner>

        <Blog>
          <PurpleLink $mt={29}>Home</PurpleLink>
          <Results>
            <Phrase>0 search results for '</Phrase>
            <BrokenImage>
              <svg width="12" height="14" viewBox="0 0 13 15" fill="none" stroke="#b3b3b3">
                <path d="M3 8.500H.5V.5h8l4 4v4H10M8.500.500v4h4M3 7l2-1.500L7 8l2-1.500 2 2M.5 11v3.500h12V11M1 11.500l2 1.500 2-2 2 2 2-2 2 1.500" />
              </svg>
            </BrokenImage>
            <span>'</span>
          </Results>
          <Rule />
          <SearchBox>
            <Field>Search the blog...</Field>
            <SearchButton>Search</SearchButton>
          </SearchBox>
          <PurpleLink $mt={32}>&lt; Back to Blog</PurpleLink>
        </Blog>
      </Page>

      <Taskbar>
        <Weather>
          <MoonIcon width="28" height="28" viewBox="0 0 28 28">
            <path d="M18 0c7 2 10.500 8 9.700 14.500C27 22 21 27.500 13.500 27.500 7 27.500 2 24 0 18c6 2 12 .500 15.500-3.500C19 10 19.500 5 18 0z" fill="url(#moon)" />
          </MoonIcon>
          <TwoLines $ml={10}>
            92°F
            <Muted>Clear</Muted>
          </TwoLines>
        </Weather>
        <Apps>
          {apps.map((icon, i) => (
            <AppButton key={i} $active={i === 14}>{icon}</AppButton>
          ))}
        </Apps>
        <Tray>
          <TrayIcon $w={40} $mt={26}><Stroke w={14} h={8} sw={1.700} c="#1c1c1c" d="M.8 7L7 1l6.200 6" /></TrayIcon>
          <TrayIcon $w={40} $mt={21}>
            <svg width="21" height="14" viewBox="0 0 21 14" stroke="#222" strokeWidth="1.200">
              <path d="M5 13.200a4.300 4.300 0 01-.5-8.500A6 6 0 0115.500 4 4.700 4.700 0 0116 13.200z" fill="#8a8a8a" />
              <path d="M4.500 13.200c-3 0-4.500-3-3-5.500L9 6l10 5c-1 1.500-2 2.200-3.500 2.200z" fill="#e2e2e2" stroke="none" />
              <path d="M5 13.200a4.300 4.300 0 01-.5-8.500A6 6 0 0115.500 4 4.700 4.700 0 0116 13.200z" fill="none" />
            </svg>
          </TrayIcon>
          <TwoLines $w={56} $align="center" $mt={10}>
            ENG
            <div>IN</div>
          </TwoLines>
          <TrayIcon $w={38} $mt={21}>
            <svg width="20" height="15" viewBox="0 0 20 15" fill="none" stroke="#222" strokeWidth="1.400">
              <path d="M.7 5.500a13.200 13.200 0 0118.600 0M3.700 8.500a9 9 0 0112.600 0M6.500 11.200a5 5 0 017 0" />
              <circle cx="10" cy="13.300" r="1.200" fill="#222" />
            </svg>
          </TrayIcon>
          <TrayIcon $w={22} $mt={21}>
            <svg width="20" height="16" viewBox="0 0 20 16" fill="none" stroke="#222" strokeWidth="1.300">
              <path d="M.7 5h3L8.500 1v14l-4.800-4h-3z" strokeLinejoin="round" />
              <path d="M11 5q2 3 0 6M13.500 3q3.500 5 0 10" />
              <path d="M16.500 1q5 7 0 14" stroke="#bbb" />
            </svg>
          </TrayIcon>
          <TrayIcon $w={38} $mt={19}>
            <svg width="20" height="17" viewBox="0 0 20 17">
              <rect x=".8" y="5.200" width="16" height="10" rx="1.500" fill="none" stroke="#222" strokeWidth="1.400" />
              <path d="M3 7.500h12v5.500H3zM17.500 8h2v4h-2z" fill="#222" />
              <path d="M5 0L.5 5.500H3L1.500 9.500 7 4H4z" fill="#222" stroke="#f1f1f1" strokeWidth=".6" />
            </svg>
          </TrayIcon>
          <TwoLines $w={88} $align="right" $mt={9}>
            20:59
            <DateLine>29-05-2024</DateLine>
          </TwoLines>
          <TrayIcon $w={39} $mt={20}>
            <svg width="17" height="20" viewBox="0 0 17 20" fill="#17424f">
              <path d="M8.500 0c4 0 6.300 2.800 6.300 6.800v4.700l2.200 4H0l2.200-4V6.800C2.200 2.800 4.500 0 8.500 0zM6 16.500h5a2.500 2.500 0 01-5 0z" />
            </svg>
          </TrayIcon>
          <TrayIcon $w={53} $mt={16}>
            <svg width="29" height="28" viewBox="0 0 29 28">
              <path d="M5 3C6 1 7 .500 9 .500h10c2 0 3 1.500 3.500 3.500L23 7h-4c-2 0-3 1-3.500 3L13 18H3c-2.500 0-3.500-1.500-2.700-4z" fill="url(#cop1)" />
              <path d="M14 .5h5c2 0 3 1.500 3.500 3.500L23 7h-4c-2 0-3 1-3.500 2z" fill="#1548c2" />
              <path d="M17 8h9c2.500 0 3.300 1.500 2.700 4l-2 7c-.7 2-2 3-4 3H12z" fill="url(#cop2)" />
              <rect x="6" y="19.500" width="23" height="11" rx="3" fill="#fdb913" />
              <text x="9.500" y="28" fontFamily="Open Sans" fontWeight="800" fontSize="9.500" fill="#1c1c1c">PRE</text>
            </svg>
          </TrayIcon>
        </Tray>
      </Taskbar>
    </Screen>
  );
}
